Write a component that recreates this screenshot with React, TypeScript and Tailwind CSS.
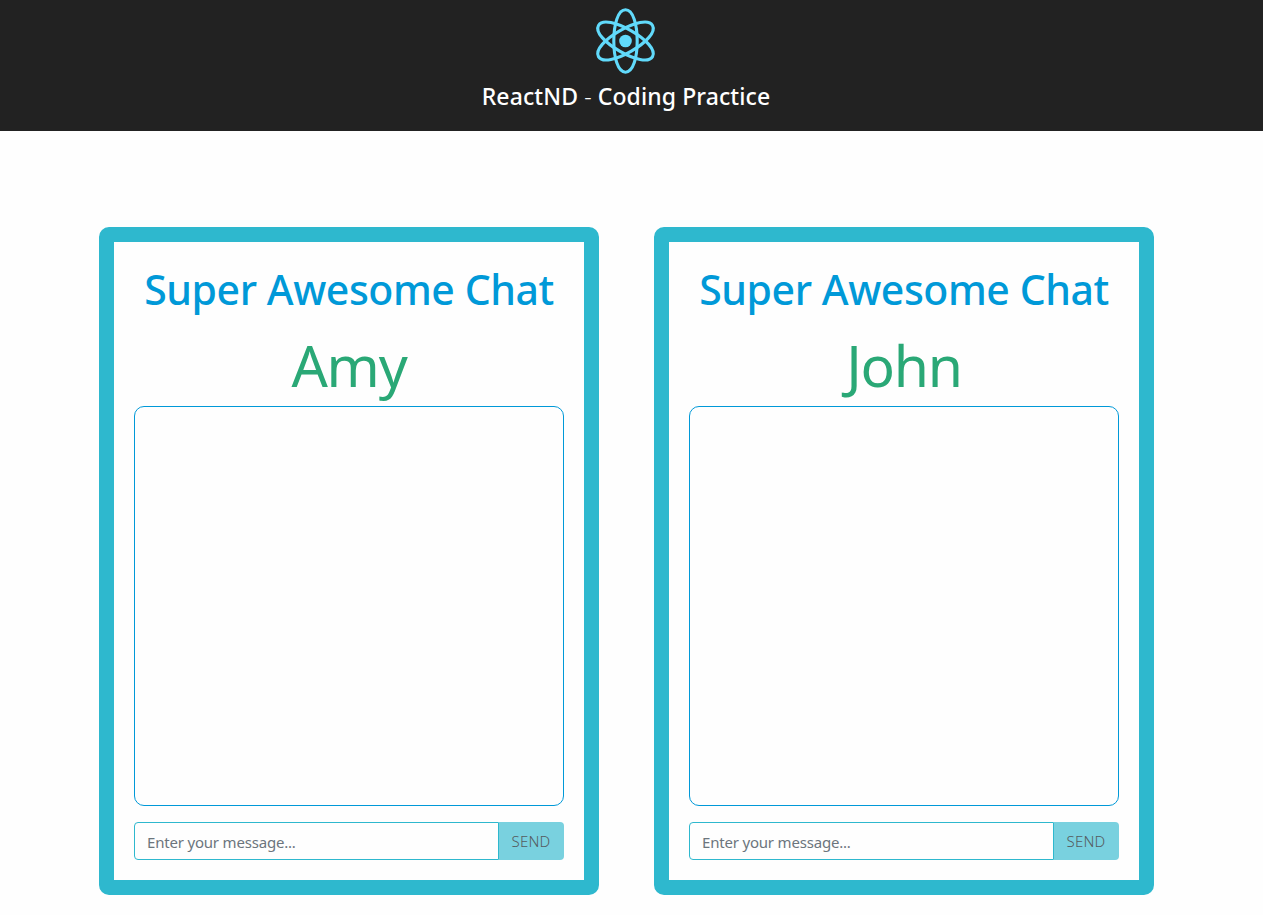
const ORBIT =
  "M0 -31.2C7.6 -31.2 11.7 -16.6 11.7 0S7.6 31.2 0 31.2S-11.7 16.6 -11.7 0S-7.6 -31.2 0 -31.2Z";

function ReactLogo() {
  return (
    <svg className="h-[80px] w-[80px]" viewBox="-39.5 -40 80 80" fill="none" stroke="#61dafb" strokeWidth="3.1">
      <circle r="6.3" fill="#61dafb" stroke="none" />
      <path d={ORBIT} />
      <path d={ORBIT} transform="rotate(60)" />
      <path d={ORBIT} transform="rotate(-60)" />
    </svg>
  );
}

function ChatWindow({ name }: { name: string }) {
  return (
    <section className="flex h-[668px] w-[500px] flex-col rounded-[10px] border-[15px] border-[#2eb8ce] p-5">
      <div className="flex flex-col items-center">
        <h2 className="h-[56px] whitespace-nowrap pt-[2px] text-[41px] leading-[50px] font-medium tracking-[-0.45px] text-[#0099d8]">
          Super Awesome Chat
        </h2>
        <div className="h-[88px] pt-[9px] text-[57px] leading-[76px] tracking-[-1.2px] text-[#2aa876]">{name}</div>
      </div>
      <ul className="h-[400px] rounded-[10px] border border-[#0099d8]" />
      <form className="mt-4 flex h-[38px]" onSubmit={(e) => e.preventDefault()}>
        <input
          type="text"
          placeholder="Enter your message..."
          className="w-[365px] rounded-l-[4px] border border-[#2eb8ce] px-[12px] pt-[2px] text-[15px] tracking-[-0.19px] text-[#495057] outline-none placeholder:text-[#6c757d]"
        />
        <button disabled className="w-[65px] rounded-r-[4px] bg-[#79d1df] pr-px text-[15px] font-light tracking-[0.2px] text-[#555b5e]">
          SEND
        </button>
      </form>
    </section>
  );
}

export default function App() {
  return (
    <div className="h-[915px] overflow-hidden bg-[#fefefe] font-['Noto_Sans','Open_Sans',sans-serif]">
      <header className="flex h-[131px] flex-col items-center bg-[#222222] pt-px pr-[11px] text-white">
        <ReactLogo />
        <h1 className="text-[23px] leading-[30px] font-medium tracking-[0.1px]">
          ReactND <span className="font-light">-</span> Coding Practice
        </h1>
      </header>
      <main className="flex gap-[55px] pt-[96px] pl-[99px]">
        <ChatWindow name="Amy" />
        <ChatWindow name="John" />
      </main>
    </div>
  );
}
